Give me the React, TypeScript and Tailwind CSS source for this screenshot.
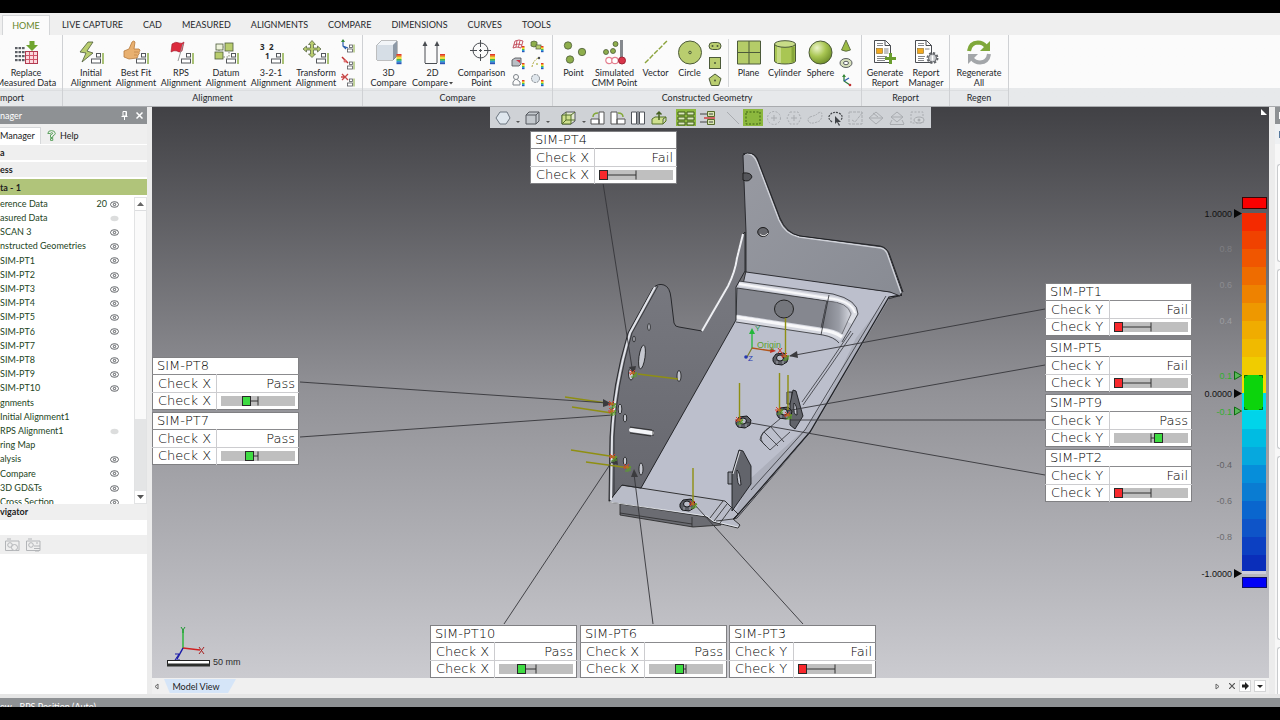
import React, { ReactNode } from "react";

const GREEN = "#b9cd6f";
const EDGE = "#4c5a3a";
const INK = "#4a4d52";

/* ---------- shared drawing pieces ---------- */

function Big({ children, w = 30 }: { children: ReactNode; w?: number }) {
  return (
    <svg width={w} height="26" viewBox={`0 0 ${w} 26`} fill="none" aria-hidden="true" className="shrink-0">
      {children}
    </svg>
  );
}

function Small({ children }: { children: ReactNode }) {
  return (
    <svg width="14" height="14" viewBox="0 0 14 14" fill="none" aria-hidden="true" className="shrink-0">
      {children}
    </svg>
  );
}

function Badge() {
  return (
    <g>
      <g stroke="#55585c" fill="#fff">
        <rect x="20.5" y="14.5" width="4" height="3.5" />
        <rect x="15.5" y="20" width="9" height="4" />
      </g>
      <path d="M27 14v11" stroke="#86a93c" strokeWidth="1.4" />
    </g>
  );
}

function SmallBadge() {
  return (
    <g>
      <rect x="8.5" y="6" width="3" height="2.5" stroke="#55585c" fill="#fff" strokeWidth=".8" />
      <rect x="6.5" y="10" width="5" height="3" stroke="#55585c" fill="#fff" strokeWidth=".8" />
      <path d="M13 5.5v8" stroke="#86a93c" />
    </g>
  );
}

function Spectrum({ x, y, w = 5, h = 10 }: { x: number; y: number; w?: number; h?: number }) {
  const colors = ["#e03a2c", "#f0a020", "#e9e23a", "#4cb848", "#2a9fd8", "#2b55b8"];
  return (
    <g>
      {colors.map((c, i) => (
        <rect key={c} x={x} y={y + (i * h) / 6} width={w} height={h / 6 + 0.2} fill={c} />
      ))}
    </g>
  );
}

/* ---------- ribbon icons ---------- */

const icons = {
  replace: (
    <Big>
      <g fill="#5c6066">
        {[8, 12, 16, 20].map((y) => [4, 7.5, 11].map((x) => <rect key={`${x}-${y}`} x={x} y={y} width="2.6" height="2.2" />))}
      </g>
      <rect x="14.5" y="12.5" width="12" height="12" fill="#fbd9de" stroke="#b23a50" />
      <path d="M15 16.500h11M15 20.500h11M18.500 13v11M22.500 13v11" stroke="#d0566a" />
      <path d="M18.500 2h5v4h3.500l-6 6-6-6h3.500z" fill="#6fa52f" />
    </Big>
  ),
  initial: (
    <Big>
      <path d="M12 3 4 13l6 1-4 9 11-9-6-2 6-9z" fill={GREEN} stroke={EDGE} strokeWidth=".8" />
      <Badge />
    </Big>
  ),
  bestFit: (
    <Big>
      <path d="M3 12 8 10 11 3q2-2 3 0l-1 7h5q2 1 0 3 1 2-1 3 0 2-1 3l-8 1-5-2z" fill="#e8b070" stroke="#b67a3c" strokeWidth=".8" />
      <path d="M13 13h4M13 16h3" stroke="#b67a3c" strokeWidth=".6" />
      <Badge />
    </Big>
  ),
  rps: (
    <Big>
      <path d="M6 5q4-3 7-1 3 1 5-1l-2 9q-3 2-5 0-3-1-6 1z" fill="#dc2a3c" stroke="#a01828" strokeWidth=".6" />
      <path d="M17 5l-5 17" stroke="#999" />
      <Badge />
    </Big>
  ),
  datum: (
    <Big>
      <path d="M8 8h10v10H8z" stroke={EDGE} strokeDasharray="1.500 1.500" strokeWidth=".7" />
      <g stroke={EDGE} strokeWidth=".8">
        <rect x="5" y="5" width="7" height="6" fill="#eef3dc" />
        <rect x="14" y="4" width="8" height="8" fill={GREEN} />
        <rect x="4" y="13" width="8" height="7" fill={GREEN} />
      </g>
      <Badge />
    </Big>
  ),
  threeTwoOne: (
    <Big>
      <g fill="#26282b" fontSize="8" fontWeight="700" fontFamily="Noto Sans, sans-serif">
        <text x="4" y="11">3</text>
        <text x="13" y="11">2</text>
        <text x="9" y="20">1</text>
      </g>
      <Badge />
    </Big>
  ),
  transform: (
    <Big>
      <path d="M11 1.500l3.500 4h-2V9h4V7l3.500 3-3.500 3v-2h-4v4h2L11 18.500 7.500 15h2v-4h-4v2L2 10l3.500-3v2h4V5.500h-2z" fill={GREEN} stroke={EDGE} strokeWidth=".7" />
      <Badge />
    </Big>
  ),
  compare3d: (
    <Big>
      <path d="M3 6l4-4h16v15l-4 4H3z" fill="#c3ccd6" stroke={INK} strokeWidth=".7" />
      <path d="M3 6h16v15H3z" fill="#d6dee6" />
      <path d="M3 6l4-4h16l-4 4z" fill="#f2f5f8" />
      <path d="M19 6l4-4v15l-4 4z" fill="#8d99a6" />
      <Spectrum x={22.5} y={15} />
    </Big>
  ),
  compare2d: (
    <Big>
      <path d="M7 24V4M19 24V4M7 24.500h12" stroke={INK} />
      <path d="M4.500 7 7 2l2.500 5zM16.500 7 19 2l2.500 5z" fill={INK} />
      <Spectrum x={22} y={15} />
    </Big>
  ),
  comparePoint: (
    <Big>
      <circle cx="13.500" cy="11.500" r="7.500" stroke={INK} />
      <path d="M13.500 1v7M13.500 15v7M3 11.500h7M17 11.500h7M12 11.500h3M13.500 10v3" stroke={INK} />
      <Spectrum x={23} y={15} />
    </Big>
  ),
  point: (
    <Big>
      <g fill="#8eae4c" stroke={EDGE} strokeWidth=".8">
        <circle cx="9" cy="6.500" r="3.700" />
        <circle cx="23" cy="13" r="3.700" />
        <circle cx="11" cy="20.500" r="3.700" />
      </g>
    </Big>
  ),
  cmm: (
    <Big>
      <rect x="20" y="1" width="3" height="17" fill="#85898e" />
      <g fill="#8eae4c" stroke={EDGE} strokeWidth=".8">
        <circle cx="15.500" cy="5" r="2.500" />
        <circle cx="6" cy="13" r="2.500" />
        <circle cx="13" cy="12" r="2.500" />
      </g>
      <g stroke="#e48090" strokeWidth="1.2" fill="#fff">
        <circle cx="9" cy="21.500" r="3.200" />
        <circle cx="15" cy="21.500" r="3.200" />
      </g>
      <circle cx="22" cy="21.500" r="3.500" fill="#d8354a" stroke="#a02234" />
    </Big>
  ),
  vector: (
    <Big>
      <path d="M4 24 26 2" stroke="#8ba33c" strokeWidth="1.4" strokeDasharray="5 1.500" />
    </Big>
  ),
  circle: (
    <Big>
      <circle cx="15" cy="13.500" r="11.500" fill={GREEN} stroke={EDGE} />
      <circle cx="15" cy="13.500" r="1.300" stroke={EDGE} />
    </Big>
  ),
  plane: (
    <Big>
      <path d="M3.500 2h23v23h-23zM15 2v23M3.500 13.500h23" fill="#b4cc68" stroke={EDGE} />
    </Big>
  ),
  cylinder: (
    <Big>
      <path d="M4.500 5v17c0 4 21 4 21 0V5" fill="#a9c653" stroke={EDGE} />
      <path d="M9 8v16" stroke="#c6da84" strokeWidth="4" />
      <path d="M23 8v15" stroke="#86a63a" strokeWidth="3" />
      <ellipse cx="15" cy="5" rx="10.500" ry="3.300" fill="#c8dc88" stroke={EDGE} />
    </Big>
  ),
  sphere: (
    <Big>
      <defs>
        <radialGradient id="ball" cx=".35" cy=".3" r=".75">
          <stop offset="0" stopColor="#edf5cc" />
          <stop offset=".5" stopColor="#a9c653" />
          <stop offset="1" stopColor="#6d8c28" />
        </radialGradient>
      </defs>
      <circle cx="14.500" cy="13.500" r="11.500" fill="url(#ball)" stroke={EDGE} />
    </Big>
  ),
  report: (
    <Big>
      <path d="M4.500 1.500h11l5 5v17h-16z" fill="#fff" stroke={INK} />
      <path d="M15 1.500v5h5.500" stroke={INK} />
      <rect x="6.500" y="9.500" width="6" height="5" fill="#f2a81d" stroke="#8b6a20" strokeWidth=".6" />
      <path d="M7 4.500h6M7 6.500h6M14 10h4.500M14 12h4.500M14 14h4.500M7 17.500h10M7 19.500h8M7 21.500h8" stroke="#77797d" strokeWidth=".9" />
      <path d="M15 19.500h11M20.500 14v11" stroke="#6a9d2e" strokeWidth="3" />
    </Big>
  ),
  manager: (
    <Big>
      <path d="M4.500 1.500h11l5 5v17h-16z" fill="#fff" stroke={INK} />
      <path d="M15 1.500v5h5.500" stroke={INK} />
      <rect x="6.500" y="9.500" width="6" height="5" fill="#f2a81d" stroke="#8b6a20" strokeWidth=".6" />
      <path d="M7 4.500h6M7 6.500h6M14 10h4.500M7 17.500h7M7 19.500h6M7 21.500h6" stroke="#77797d" strokeWidth=".9" />
      <circle cx="21.500" cy="19" r="5" stroke="#63666a" strokeWidth="2" strokeDasharray="2.200 1.700" />
      <circle cx="21.500" cy="19" r="4" fill="#c9cbce" stroke="#63666a" />
      <path d="M21.500 16.500v5" stroke="#fff" strokeWidth="1.500" />
    </Big>
  ),
  regen: (
    <Big>
      <path d="M5 12q1-8 9-8.500 5 0 8 4" stroke="#7fa83a" strokeWidth="4" />
      <path d="M26 2v10H16z" fill="#7fa83a" />
      <path d="M25 15q-1 8-9 8.500-5 0-8-4" stroke="#a3a6a9" strokeWidth="4" />
      <path d="M4 25V15h10z" fill="#a3a6a9" />
    </Big>
  ),
};

const alignSmall = [
  <Small key="a"><path d="M2 1v6l5 2M2 7l3 3" stroke="#2c5fb0" strokeWidth="1.200" /><path d="M0 3 2 0l2 3z" fill="#3a8a3a" /><SmallBadge /></Small>,
  <Small key="b"><path d="M1 1l6 6" stroke="#c03030" strokeWidth="1.500" /><circle cx="4" cy="5" r="1.500" fill="#e07070" /><SmallBadge /></Small>,
  <Small key="c"><path d="M1 1l6 6M7 1 1 7M0 4h4" stroke="#c84848" strokeWidth="1.300" /><SmallBadge /></Small>,
];

const compareSmall = [
  <Small key="1"><path d="M2 9 4 2q4-2 8 0l-2 7q-4-2-8 0zM3 6q4-2 8 0M6 1.500 5 8M9 1.500 7.500 8" stroke="#c04454" strokeWidth=".9" /><Spectrum x={11} y={7} w={2.500} h={6} /></Small>,
  <Small key="2"><path d="M1 3v4q3 2 6 0V3q-3-2-6 0z" fill="#8eae4c" stroke={EDGE} strokeWidth=".7" /><rect x="6" y="6" width="5" height="4" fill={GREEN} stroke={EDGE} strokeWidth=".7" /><Spectrum x={11} y={7} w={2.500} h={6} /></Small>,
  <Small key="3"><path d="M1 4l3-2h6v6L8 10H1z" fill="#b9bec4" stroke={INK} strokeWidth=".8" /><path d="M5 4h4v3z" fill="#d03040" /><Spectrum x={11} y={7} w={2.500} h={6} /></Small>,
  <Small key="4"><path d="M2 11q1-6 6-9" stroke="#b0a840" strokeDasharray="2 1" /><circle cx="9" cy="2" r="1.200" fill={INK} /><circle cx="7" cy="8" r="1" fill="#b8c060" /><Spectrum x={11} y={7} w={2.500} h={6} /></Small>,
  <Small key="5"><circle cx="5" cy="4" r="2.500" stroke="#7c8288" /><path d="M4 6.500 2 9v3h7V9L6 6.500" stroke="#7c8288" /><Spectrum x={11} y={7} w={2.500} h={6} /></Small>,
  <Small key="6"><circle cx="5.500" cy="5.500" r="4" fill="#dfe6ec" stroke="#7c8288" strokeDasharray="2 .8" /><Spectrum x={11} y={7} w={2.500} h={6} /></Small>,
];

const shapeSmall = [
  <Small key="s"><rect x="1" y="3.500" width="12" height="7" rx="3.500" fill={GREEN} stroke={EDGE} /><circle cx="4.500" cy="7" r="1" fill={EDGE} /><circle cx="9.500" cy="7" r="1" fill={EDGE} /></Small>,
  <Small key="r"><rect x="1.500" y="1.500" width="11" height="11" fill={GREEN} stroke={EDGE} /><circle cx="7" cy="7" r="1" fill={EDGE} /></Small>,
  <Small key="p"><path d="M7 1l6 4.500-2.300 7H3.300L1 5.500z" fill={GREEN} stroke={EDGE} /><circle cx="7" cy="7.500" r="1" fill={EDGE} /></Small>,
];

const solidSmall = [
  <Small key="c"><path d="M7 1l4.500 10q-4.500 2.500-9 0z" fill="#9cbc45" stroke={EDGE} strokeWidth=".8" /></Small>,
  <Small key="t"><ellipse cx="7" cy="7" rx="6" ry="4.500" fill="#d6dfbb" stroke={INK} strokeWidth=".9" /><ellipse cx="7" cy="7" rx="2.500" ry="1.700" fill="#fff" stroke={INK} strokeWidth=".9" /></Small>,
  <Small key="x"><path d="M5 2v6l6 4" stroke="#2f7a3a" strokeWidth="1.300" /><path d="M5 8l5-3" stroke="#2c5fb0" strokeWidth="1.300" /><circle cx="11" cy="12" r="1.300" fill="#c03030" /><path d="M3 4 5 1l2 3z" fill="#3a8a3a" /></Small>,
];

/* ---------- ribbon ---------- */

function Tool({ icon, top, bottom, w, menu }: { icon: ReactNode; top: string; bottom?: string; w: string; menu?: boolean }) {
  return (
    <button type="button" className={`flex shrink-0 flex-col items-center gap-[3px] pt-1 text-[9px] leading-[10px] whitespace-nowrap ${w}`}>
      {icon}
      <span className="flex flex-col items-center">
        <span>{top}</span>
        {bottom && (
          <span className="flex items-center gap-px">
            {bottom}
            {menu && (
              <svg width="4" height="3" viewBox="0 0 4 3" aria-hidden="true"><path d="M0 0h4L2 2.500z" fill="#444" /></svg>
            )}
          </span>
        )}
      </span>
    </button>
  );
}

function SmallColumn({ items, names, wide }: { items: ReactNode[]; names: string[]; wide?: boolean }) {
  return (
    <div className={`flex shrink-0 flex-col gap-[3px] pt-1 ${wide ? "px-[3px]" : "px-[2px]"}`}>
      {items.map((item, i) => (
        <button type="button" key={names[i]} aria-label={names[i]} className="block">{item}</button>
      ))}
    </div>
  );
}

function Group({ label, w, pad = "", children }: { label: string; w: string; pad?: string; children: ReactNode }) {
  return (
    <section className={`flex shrink-0 flex-col overflow-hidden border-r border-[#cfd1d4] ${w}`}>
      <div className={`flex h-[55px] justify-center ${pad}`}>{children}</div>
      <h2 className="h-[16px] border-t border-[#dcdee0] bg-[#e7e9eb] text-center text-[9px] leading-[14px]">{label}</h2>
    </section>
  );
}

const tabs = ["HOME", "LIVE CAPTURE", "CAD", "MEASURED", "ALIGNMENTS", "COMPARE", "DIMENSIONS", "CURVES", "TOOLS"];

function Ribbon() {
  return (
    <header className="shrink-0 bg-[#e7e9eb] text-[#26282c]">
      <nav className="flex h-[22px] items-end bg-[#efefef] pl-[2px]">
        {tabs.map((t, i) => (
          <button
            key={t}
            type="button"
            className={
              i === 0
                ? "mr-[2px] h-[20px] w-[48px] border border-b-0 border-[#d4d6d8] bg-[#fbfbfb] text-[9px] leading-[16px] text-[#67862a]"
                : "h-[20px] px-[10px] text-[9px] leading-[18px] whitespace-nowrap"
            }
          >
            {t}
          </button>
        ))}
      </nav>
      <div className="flex h-[72px] border-b border-[#a9abae] bg-linear-to-b from-[#fbfbfb] from-75% to-[#e7e9eb] to-75%">
        <section className="flex w-[63px] shrink-0 flex-col overflow-hidden border-r border-[#cfd1d4]">
          <div className="flex h-[55px] justify-end pr-[6px]">
            <Tool icon={icons.replace} top="Replace" bottom="Measured Data" w="w-[60px]" />
          </div>
          <h2 className="h-[16px] border-t border-[#dcdee0] bg-[#e7e9eb] text-[9px] leading-[14px]">mport</h2>
        </section>
        <Group label="Alignment" w="w-[300px]">
          <Tool icon={icons.initial} top="Initial" bottom="Alignment" w="w-[45px]" />
          <Tool icon={icons.bestFit} top="Best Fit" bottom="Alignment" w="w-[45px]" />
          <Tool icon={icons.rps} top="RPS" bottom="Alignment" w="w-[45px]" />
          <Tool icon={icons.datum} top="Datum" bottom="Alignment" w="w-[45px]" />
          <Tool icon={icons.threeTwoOne} top="3-2-1" bottom="Alignment" w="w-[45px]" />
          <Tool icon={icons.transform} top="Transform" bottom="Alignment" w="w-[45px]" />
          <SmallColumn items={alignSmall} names={["Align to axes", "Align by point", "Clear alignment"]} />
        </Group>
        <Group label="Compare" w="w-[190px]" pad="pr-[2px]">
          <Tool icon={icons.compare3d} top="3D" bottom="Compare" w="w-[44px]" />
          <Tool icon={icons.compare2d} top="2D" bottom="Compare" w="w-[44px]" menu />
          <Tool icon={icons.comparePoint} top="Comparison" bottom="Point" w="w-[54px]" />
          <SmallColumn items={[compareSmall[0], compareSmall[2], compareSmall[4]]} names={["Surface", "Solid", "Silhouette"]} />
          <SmallColumn wide items={[compareSmall[1], compareSmall[3], compareSmall[5]]} names={["Geometry", "Curve", "Boundary"]} />
        </Group>
        <Group label="Constructed Geometry" w="w-[309px]" pad="pr-[4px]">
          <Tool icon={icons.point} top="Point" w="w-[36px]" />
          <Tool icon={icons.cmm} top="Simulated" bottom="CMM Point" w="w-[46px]" />
          <Tool icon={icons.vector} top="Vector" w="w-[36px]" />
          <Tool icon={icons.circle} top="Circle" w="w-[32px]" />
          <SmallColumn items={shapeSmall} names={["Slot", "Rectangle", "Polygon"]} />
          <span className="mx-[4px] mt-1 h-[48px] w-px shrink-0 bg-[#d5d7d9]" />
          <Tool icon={icons.plane} top="Plane" w="w-[32px]" />
          <Tool icon={icons.cylinder} top="Cylinder" w="w-[40px]" />
          <Tool icon={icons.sphere} top="Sphere" w="w-[32px]" />
          <SmallColumn items={solidSmall} names={["Cone", "Torus", "Coordinate system"]} />
        </Group>
        <Group label="Report" w="w-[88px]">
          <Tool icon={icons.report} top="Generate" bottom="Report" w="w-[41px]" />
          <Tool icon={icons.manager} top="Report" bottom="Manager" w="w-[41px]" />
        </Group>
        <Group label="Regen" w="w-[59px]">
          <Tool icon={icons.regen} top="Regenerate" bottom="All" w="w-[50px]" />
        </Group>
      </div>
    </header>
  );
}

/* ---------- left panel ---------- */

type Row = { label: string; eye?: "on" | "off"; count?: number };

const rows: Row[] = [
  { label: "erence Data", eye: "on", count: 20 },
  { label: "asured Data", eye: "off" },
  { label: "SCAN 3", eye: "on" },
  { label: "nstructed Geometries", eye: "on" },
  ...[1, 2, 3, 4, 5, 6, 7, 8, 9, 10].map((n): Row => ({ label: `SIM-PT${n}`, eye: "on" })),
  { label: "gnments" },
  { label: "Initial Alignment1" },
  { label: "RPS Alignment1", eye: "off" },
  { label: "ring Map" },
  { label: "alysis", eye: "on" },
  { label: "Compare", eye: "on" },
  { label: "3D GD&Ts", eye: "on" },
  { label: "Cross Section", eye: "on" },
];

function Eye({ on }: { on: boolean }) {
  return (
    <svg width="9" height="7" viewBox="0 0 9 7" fill="none" aria-hidden="true">
      {on ? (
        <g stroke="#55585c">
          <ellipse cx="4.500" cy="3.500" rx="4" ry="2.800" strokeWidth=".9" />
          <circle cx="4.500" cy="3.500" r="1.200" />
        </g>
      ) : (
        <ellipse cx="4.500" cy="3.500" rx="4" ry="2.800" fill="#dcdddd" />
      )}
    </svg>
  );
}

function LeftPanel() {
  return (
    <aside className="flex w-[147px] shrink-0 flex-col bg-white text-[9px] text-[#222]">
      <div className="flex h-[17px] items-center justify-between bg-[#8e9194] pr-1 text-white">
        <span>nager</span>
        <span className="flex gap-[8px]">
          <button type="button" aria-label="Pin">
            <svg width="7" height="9" viewBox="0 0 7 9" fill="none" stroke="#fff" aria-hidden="true"><path d="M2 .5h3.500V5H2zM.5 5.500h6M3.500 5.500V9M5 .5V5" /></svg>
          </button>
          <button type="button" aria-label="Close">
            <svg width="7" height="7" viewBox="0 0 7 7" stroke="#fff" strokeWidth="1.500" aria-hidden="true"><path d="M.5.5l6 6M6.500.5l-6 6" /></svg>
          </button>
        </span>
      </div>
      <div className="flex h-[20px] items-end bg-[#efefef]">
        <button type="button" className="h-[17px] w-[41px] border-t border-r border-[#d6d8da] bg-white text-left leading-[16px]">Manager</button>
        <button type="button" className="flex h-[17px] items-center gap-[4px] px-[6px]">
          <svg width="9" height="11" viewBox="0 0 9 11" fill="none" stroke="#4e9a50" strokeWidth=".9" aria-hidden="true"><path d="M.8 3.500Q1 .6 4.500.6T8.300 3.500Q8 5 5.800 6v1.500H3.500V4.800Q6 4 5.800 3.200 4.500 2 3.200 3.500zM3.500 8.500h2.300v1.900H3.500z" /></svg>
          Help
        </button>
      </div>
      <div className="flex flex-col gap-[2px] pt-px pb-[2px] font-bold">
        <h3 className="h-[15px] bg-[#efefef] leading-[15px]">a</h3>
        <h3 className="h-[15px] bg-[#efefef] leading-[16px]">ess</h3>
        <h3 className="h-[16px] bg-[#b0c47a] leading-[17px]">ta - 1</h3>
      </div>
      <div className="flex h-[307px] shrink-0">
        <ul className="flex min-w-0 flex-1 flex-col overflow-hidden text-[#1d451d]">
          {rows.map((r, i) => (
            <li key={i} className={`flex shrink-0 items-center justify-between pr-[15px] ${i % 5 === 4 ? "h-[15px]" : "h-[14px]"}`}>
              <span className="whitespace-nowrap">{r.label}</span>
              <span className="flex items-center gap-[3px]">
                {r.count}
                {r.eye && <Eye on={r.eye === "on"} />}
              </span>
            </li>
          ))}
        </ul>
        <div className="flex w-[13px] flex-col border border-[#e2e3e4] bg-[#e4e5e6]">
          <button type="button" aria-label="Scroll up" className="flex h-[13px] items-center justify-center border-b border-[#dcdddf] bg-white">
            <svg width="7" height="4" viewBox="0 0 7 4" aria-hidden="true"><path d="M0 4h7L3.500 0z" fill="#666" /></svg>
          </button>
          <span className="h-[208px] bg-[#fafafa]" />
          <span className="flex-1" />
          <button type="button" aria-label="Scroll down" className="flex h-[12px] items-center justify-center bg-white">
            <svg width="7" height="4" viewBox="0 0 7 4" aria-hidden="true"><path d="M0 0h7L3.500 4z" fill="#555" /></svg>
          </button>
        </div>
      </div>
      <h3 className="h-[16px] shrink-0 bg-[#efefef] font-bold leading-[16px]">vigator</h3>
      <div className="mt-[15px] flex h-[19px] shrink-0 items-center gap-[6px] bg-[#efefef] pl-[5px]">
        {["Capture view", "Edit view"].map((n, i) => (
          <button type="button" key={n} aria-label={n}>
            <svg width="15" height="14" viewBox="0 0 15 14" fill="none" stroke="#b3b5b8" aria-hidden="true">
              <path d="M.5 3h13.500v9.500H.5zM2 1h4" />
              <circle cx="5" cy="7" r="2.300" />
              {i === 0 ? <circle cx="9.500" cy="9.500" r="3" fill="#efefef" /> : <path d="M8 8h6M8 10.500h6M9 13h4M10 5h2" />}
            </svg>
          </button>
        ))}
      </div>
    </aside>
  );
}

/* ---------- 3D view ---------- */

type Check = { name: string; axis: "X" | "Y"; pass: boolean; at: number; place: string };

const checks: Check[] = [
  { name: "SIM-PT4", axis: "X", pass: false, at: 0, place: "left-[378px] top-[24px]" },
  { name: "SIM-PT8", axis: "X", pass: true, at: 21, place: "left-0 top-[250px]" },
  { name: "SIM-PT7", axis: "X", pass: true, at: 24, place: "left-0 top-[305px]" },
  { name: "SIM-PT1", axis: "Y", pass: false, at: 0, place: "left-[893px] top-[176px]" },
  { name: "SIM-PT5", axis: "Y", pass: false, at: 0, place: "left-[893px] top-[232px]" },
  { name: "SIM-PT9", axis: "Y", pass: true, at: 40, place: "left-[893px] top-[287px]" },
  { name: "SIM-PT2", axis: "Y", pass: false, at: 0, place: "left-[893px] top-[342px]" },
  { name: "SIM-PT10", axis: "X", pass: true, at: 18, place: "left-[278px] top-[518px]" },
  { name: "SIM-PT6", axis: "X", pass: true, at: 26, place: "left-[428px] top-[518px]" },
  { name: "SIM-PT3", axis: "Y", pass: false, at: 0, place: "left-[577px] top-[518px]" },
];

function Callout({ c }: { c: Check }) {
  return (
    <table className={`absolute w-[147px] table-fixed border-collapse border border-[#808083] bg-white font-['DejaVu_Sans',Verdana,sans-serif] text-[13px] font-extralight text-black ${c.place}`}>
      <colgroup>
        <col className="w-[64px]" />
        <col />
      </colgroup>
      <tbody>
        <tr className="h-[17px] border-b border-[#8b8b8e]">
          <th colSpan={2} scope="colgroup" className="p-0 pl-[4px] text-left font-extralight leading-[16px]">{c.name}</th>
        </tr>
        <tr className="h-[18px] border-b border-[#cccccf]">
          <th scope="row" className="border-r border-[#cccccf] p-0 pl-[5px] text-left font-extralight leading-[16px] whitespace-nowrap">Check {c.axis}</th>
          <td className="p-0 pr-[3px] text-right leading-[16px]">{c.pass ? "Pass" : "Fail"}</td>
        </tr>
        <tr className="h-[17px]">
          <th scope="row" className="border-r border-[#cccccf] p-0 pl-[5px] text-left font-extralight leading-[16px] whitespace-nowrap">Check {c.axis}</th>
          <td className="p-0 pl-[4px]">
            <svg width="74" height="10" viewBox="0 0 74 10" className="block" aria-hidden="true">
              <rect width="74" height="10" fill="#bfbfbf" />
              <path d={`M${c.at + 4} 5H37M37 .5v9`} stroke="#333" />
              <rect x={c.at + 0.5} y=".5" width="8" height="9" fill={c.pass ? "#3edb42" : "#f8282c"} stroke="#2a2a2a" />
            </svg>
          </td>
        </tr>
      </tbody>
    </table>
  );
}

function Hex({ x, y }: { x: number; y: number }) {
  return (
    <g transform={`translate(${x} ${y})`}>
      <path d="M-8-1-5-5 3-6 7-2 6 3 1 6-6 5-8 2z" fill="#5b5d64" stroke="#17181a" />
      <ellipse cx="-1" cy="-1" rx="3.500" ry="3" fill="#b9bcc8" stroke="#17181a" />
      <path d="M-4 2v3M2 2v3" stroke="#c9ccd4" strokeWidth=".7" />
    </g>
  );
}

function Marker({ x, y }: { x: number; y: number }) {
  return (
    <g transform={`translate(${x} ${y})`}>
      <path d="M-3-3l5 5M2-3l-5 5M-4 0h7" stroke="#dd3c2c" />
      <path d="M0 3l4-3M3-1v5M-2 4h4" stroke="#5da02a" strokeWidth="1.200" />
      <circle r="1.500" fill="#b07420" />
    </g>
  );
}

function Bracket() {
  return (
    <svg viewBox="152 107 1117 571" width="1117" height="571" className="block" fill="none" role="img" aria-label="Bracket model">
      <defs>
        <linearGradient id="back" x1="0" y1="0" x2="1" y2="1">
          <stop offset="0" stopColor="#989aa2" />
          <stop offset="1" stopColor="#888b93" />
        </linearGradient>
        <linearGradient id="side" x1="0" y1="0" x2="0" y2="1">
          <stop offset="0" stopColor="#7b7c83" />
          <stop offset="1" stopColor="#66676e" />
        </linearGradient>
        <linearGradient id="corner" x1="0" y1="0" x2="1" y2="0">
          <stop offset="0" stopColor="#777981" />
          <stop offset=".6" stopColor="#9a9da6" />
          <stop offset="1" stopColor="#d8dae2" />
        </linearGradient>
      </defs>

      {/* floor and right flange */}
      <path d="M746 271 891 292 902 295 888 299 809 434 737 518 723 523 640 489 735 320z" fill="#bcbfcc" stroke="#26272a" strokeWidth=".9" />
      <path d="M888 297 856 338 829 394 806 428 751 478 736 511 724 522 734 520 810 434 889 299z" fill="#adb0bc" />
      <path d="M902 295 889 297 810 432 734 519" stroke="#202124" strokeWidth="1.300" />
      <path d="M886 296 805 430 751 490M853 333 829 368 803 405M851 331 826 368 802 402" stroke="#34353a" strokeWidth=".8" />

      {/* back pocket */}
      <path d="M739 281 834 295q23 5 23 19l-13 25-21-4-87-13V288z" fill="#c6c8d2" />
      <path d="M737 288 827 301 821 329 736 315z" fill="#85878f" stroke="#26272a" strokeWidth=".8" />
      <path d="M827 301q21 1 24 13l-9 20q-10-3-21-5z" fill="url(#corner)" stroke="#3c3d42" strokeWidth=".6" />
      <path d="M739 284 827 298q24 2 28 15l-5 10" stroke="#dcdee5" strokeWidth="4.500" />
      <path d="M739 284 827 298q24 2 28 15" stroke="#f8f8fa" strokeWidth="2" />
      <path d="M736 318 820 331q14 1 22 7" stroke="#d6d8e0" strokeWidth="7" />
      <path d="M736 317 820 330q14 1 22 7" stroke="#f8f8fa" strokeWidth="3" />
      <path d="M739 281 833 294q25 6 25 20l-16 28M736 322 823 335q11 2 16 8M829 295 821 335" stroke="#2c2d31" strokeWidth=".8" />
      <ellipse cx="784" cy="309" rx="9.500" ry="9" fill="#74767c" stroke="#222" />

      {/* back plate */}
      <path d="M743 155q8-4 13 4l23 59q5 15 20 18l81 11q5 0 8 6l14 39-2 4-10-4-144-20V232z" fill="url(#back)" stroke="#222327" strokeWidth=".9" />
      <path d="M745 154q8-2 12 8l22 58q6 14 20 17l82 11q4 1 6 5l14 40" stroke="#cfd1d8" strokeWidth="1.500" />
      <path d="M743 154q10-3 14 4l23 60q6 15 20 18l80 10q6 1 9 7l14 39" stroke="#1c1d20" strokeWidth=".9" />
      <path d="M743 173q8-1 9 4-3 6-9 3z" fill="#55565b" stroke="#111" strokeWidth=".8" />
      <ellipse cx="763" cy="232" rx="5.300" ry="4.500" fill="#66676c" stroke="#111" strokeWidth=".9" />
      <path d="M760 234q4 4 8-1" stroke="#ddd" />

      {/* front flange */}
      <path d="M620 504v11l73 12 28-2v-8z" fill="#6b6c72" stroke="#222" strokeWidth=".8" />
      <path d="M692 517v10M620 513l72 11" stroke="#222" strokeWidth=".7" />
      <path d="M621 485 725 501 738 514 733 519 740 525 738 528 713 522 707 517 609 502z" fill="#b9bcc8" stroke="#222" strokeWidth=".9" />
      <path d="M609 502 707 516 713 521 738 527" stroke="#eef0f4" strokeWidth=".8" />
      <path d="M723 501 710 518M727 504 714 521M731 508 720 523M716 521l17-2" stroke="#222" strokeWidth=".8" />

      {/* left plate */}
      <path d="M609 501 610 437Q612 385 628 333L653 288q5-5 11-3 6 2 7 13l3 25q1 4 5 4l23 4 25-44q7-13 10-31l6-22 2-2v39l-9 16v33L641 488l-19-3z" fill="url(#side)" stroke="#1e1f22" strokeWidth=".9" />
      <path d="M611 500 612 437Q614 387 630 333L655 287" stroke="#e2e4ea" strokeWidth="2" />
      <path d="M702 331 728 286Q735 272 737 258L743 234" stroke="#eeeff3" strokeWidth="2" />
      <path d="M614 495 614 437Q616 387 632 333L658 286" stroke="#1e1f22" strokeWidth=".7" />
      <g fill="#c6c8d0" stroke="#151618" strokeWidth=".8">
        <ellipse cx="642" cy="357" rx="3" ry="12" transform="rotate(8 642 357)" />
        <ellipse cx="649" cy="327" rx="1.300" ry="3.500" />
        <ellipse cx="634" cy="339" rx="1.200" ry="3" />
        <ellipse cx="679" cy="376" rx="2" ry="5.500" />
        <ellipse cx="631" cy="374" rx="2.500" ry="6" />
        <ellipse cx="620" cy="409" rx="1.800" ry="5" />
        <ellipse cx="625" cy="418" rx="1.700" ry="4" />
        <ellipse cx="625" cy="461" rx="1.700" ry="4" />
        <ellipse cx="641" cy="469" rx="2" ry="6" />
      </g>
      <path d="M631 430 652 433" stroke="#f4f5f8" strokeWidth="4" strokeLinecap="round" />
      <path d="M630 427 652 430M630 433 651 436M653 430v6" stroke="#222" strokeWidth=".8" />

      {/* standing tabs */}
      <g stroke="#1a1b1e" fill="#62646b" strokeWidth=".9">
        <path d="M728 472h5v12h-5z" fill="#8d9099" />
        <path d="M732 474 739 450 743 451 751 466 751 484 732 511z" />
        <path d="M787 392h5v12h-5z" fill="#8d9099" />
        <path d="M790 404 793 390 796 391 803 416 795 429 790 425z" />
        <path d="M737 470q3 2 4 15-4 3-4-15z" fill="#c7cad4" />
        <path d="M794 403q3 2 3 12-4 1-3-12z" fill="#c7cad4" />
      </g>
      <path d="M733 474 740 451" stroke="#dfe1e6" />
      <path d="M760 440q1-8 10-13M766 446q-8-6-3-13l18-15M770 426l14 16M764 432l14 14M760 440l10 10 20-18" stroke="#2c2d31" strokeWidth=".8" />

      {/* fasteners */}
      <Hex x={781} y={359} />
      <Hex x={744} y={422} />
      <Hex x={785} y={413} />
      <Hex x={688} y={505} />

      {/* probe directions */}
      <path d="M785.500 318v36M739.500 383v37M779.500 373v38M788 375v35M693 468v36M638 374l40 5M565 397l48 7M572 407l40 6M571 450l45 7M586 462l44 6" stroke="#8f8f12" strokeWidth="1.400" />

      {/* leader lines */}
      <g stroke="#36363a" strokeWidth=".9">
        <path d="M603 183 633 374M300 382l308 21M300 437l313-22M1045 309 790 356M1045 365 786 411M1045 420H790M1045 475 745 422" />
        <path d="M504 624 613 460M653 624 634 474M803 624 695 505" />
      </g>
      <g fill="#3b3b3e">
        <path d="M603 399l9 5-9 3zM789 356l8-5 1 7zM629 367l5 8 2-9zM631 477l3-8 4 8zM611 463l6-6 1 8z" />
      </g>
      {[[785, 356], [739, 420], [779, 410], [788, 415], [693, 504], [633, 373], [612, 404], [612, 411], [613, 457], [627, 467]].map(([x, y]) => (
        <Marker key={`${x}-${y}`} x={x} y={y} />
      ))}

      {/* origin triad */}
      <path d="M752 348v-16" stroke="#22b83a" strokeWidth="1.300" />
      <path d="M749 334l3-6 3 6z" fill="#22b83a" />
      <path d="M752 348l20 3" stroke="#b0561c" strokeWidth="1.300" />
      <path d="M771 348l5 3-6 2z" fill="#c03020" />
      <path d="M752 348l-5 9" stroke="#7a7c28" strokeWidth="1.200" />
      <circle cx="746" cy="357" r="1.800" fill="#2638b0" />
      <path d="M778 348l4 5M782 348l-4 5" stroke="#d03428" />
      <g fontFamily="Liberation Sans, sans-serif" fontSize="8">
        <text x="757" y="348" fontSize="9" fill="#5ba02c">Origin</text>
        <text x="755" y="331" fill="#1a9c50">Y</text>
        <text x="748" y="361" fill="#2638b0">Z</text>
      </g>

      {/* view triad and scale bar */}
      <path d="M183 648v-18" stroke="#18b428" strokeWidth="1.300" />
      <path d="M183 648l17 2" stroke="#d02020" strokeWidth="1.300" />
      <path d="M183 648l-6 11" stroke="#1818a8" strokeWidth="1.500" />
      <path d="M181 627l2 3 2-3M183 630v3" stroke="#18982c" />
      <path d="M199 647l5 7M204 647l-5 7" stroke="#a82020" />
      <path d="M175 654h4l-4 6h5" stroke="#1818a8" />
      <rect x="167.500" y="660.500" width="42" height="5" fill="#fff" stroke="#222" />
      <path d="M167 665h43" stroke="#2c2e2c" strokeWidth="3" />
      <text x="213" y="665" fontFamily="Liberation Sans, sans-serif" fontSize="9" fill="#2c2c2e">50 mm</text>
    </svg>
  );
}

const legendColors = [
  "#f42a00", "#f04200", "#f05600", "#ee6c00", "#ee8200", "#ee9800", "#f0ac00", "#f0ba00", "#f0cc00", "#f2de00",
  "#00dcec", "#00d4ea", "#00bce2", "#06a8de", "#068eda", "#0a7cd2", "#0a66ce", "#0e54c8", "#0c40c2", "#0a2eba",
];

const legendLabels: [string, number, string][] = [
  ["1.0000", 20, "#111"], ["0.8", 55, "#7e7e82"], ["0.6", 91, "#8c8c90"], ["0.4", 127, "#9c9ca0"],
  ["0.1", 182, "#30b030"], ["0.0000", 200, "#111"], ["-0.1", 218, "#30b030"],
  ["-0.4", 271, "#626266"], ["-0.6", 307, "#6a6a6e"], ["-0.8", 343, "#6d6d70"], ["-1.0000", 380, "#111"],
];

function Legend() {
  return (
    <svg width="70" height="396" viewBox="0 0 70 396" className="absolute top-[87px] right-0" role="img" aria-label="Deviation scale">
      <rect x="43.500" y="3.500" width="24" height="11" fill="#fb0000" stroke="#3a0505" />
      {legendColors.map((c, i) => (
        <rect key={c} x="43" y={19 + i * 18} width="24" height="18" fill={c} />
      ))}
      <rect x="45" y="181" width="19" height="35" fill="#0cd40c" />
      <path d="M45.500 184v-2.500h3M60 181.500h3.500v2.500M45.500 213v2.500h3M60 215.500h3.500V213" stroke="#0a6a0a" fill="none" />
      <path d="M43 378.500h24" stroke="#ccccdc" strokeWidth="3" />
      <rect x="43.500" y="383.500" width="24" height="10" fill="#0000f6" stroke="#101060" />
      <path d="M35 15l8 4.500-8 4.500zM35 195l8 4.500-8 4.500zM35 375l8 4.500-8 4.500z" fill="#080808" />
      <path d="M35.500 177.500l7 4-7 4zM35.500 213l7 4-7 4z" fill="#59b859" stroke="#0d6a10" />
      <g fontFamily="Liberation Sans, sans-serif" fontSize="9" textAnchor="end">
        {legendLabels.map(([t, y, c]) => (
          <text key={t} x="33" y={y + 3} fill={c}>{t}</text>
        ))}
      </g>
    </svg>
  );
}

const faint = "#a9acb0";
const viewTools: { name: string; w: string; on?: boolean; art: ReactNode }[] = [
  { name: "Shaded", w: "w-[20px]", art: <path d="M5 2h7l3 6-4 6H5L1 8z" fill="#dfe7ee" stroke="#6c7680" /> },
  { name: "Shaded options", w: "w-[9px]", art: <path d="M6 11h4l-2 2z" fill="#555" /> },
  { name: "View cube", w: "w-[20px]", art: <path d="M2 5l3-3h10v9l-3 3H2zM2 5h10v9M12 5l3-3" fill="#c4c9ce" stroke="#55595e" /> },
  { name: "View options", w: "w-[12px]", art: <path d="M6 11h4l-2 2z" fill="#555" /> },
  { name: "Section", w: "w-[27px]", art: <><path d="M2 5l4-3h9v9l-4 3H2z" fill="#e4ebd0" stroke="#556" /><path d="M2 5h9v9H2z" fill="#cfe08e" stroke="#55702a" /><path d="M11 5l4-3M6 2v8h9M2 14l4-4" fill="none" stroke="#55702a" /></> },
  { name: "Section options", w: "w-[6px]", art: <path d="M6 11h4l-2 2z" fill="#555" /> },
  { name: "Rotate left", w: "w-[21px]", art: <><path d="M9 2h5v12H9zM1 9h8v5H1z" fill="#fff" stroke="#555" /><path d="M3 7q0-4 5-4" fill="none" stroke="#84a83a" strokeWidth="1.500" /></> },
  { name: "Rotate right", w: "w-[20px]", art: <><path d="M1 2h6v12H1zM7 9h8v5H7z" fill="#fff" stroke="#555" /><path d="M8 3q5 0 5 4" fill="none" stroke="#84a83a" strokeWidth="1.500" /></> },
  { name: "Split", w: "w-[20px]", art: <><path d="M1.500 2h5v12h-5zM9.500 2h5v12h-5z" fill="#fff" stroke="#50545a" /><path d="M8 1v14" stroke="#50545a" /></> },
  { name: "Normal view", w: "w-[21px]", art: <><path d="M1 9l3-2h11l-3 2v5H1zM12 14l3-3V7" fill="#cfe08e" stroke="#55702a" /><path d="M8 10V2M5.500 4.500 8 2l2.500 2.500" fill="none" stroke="#456020" strokeWidth="1.500" /></> },
  { name: "Callout grid", w: "w-[20px] ml-[7px]", on: true, art: <path d="M0 2h7v3H0zM9 2h7v3H9zM0 7h7v3H0zM9 7h7v3H9zM0 12h7v3H0zM9 12h7v3H9z" fill="#dbe8bb" stroke="#405a1c" /> },
  { name: "Callout align", w: "w-[21px]", art: <><path d="M8.500 1.500h7v5h-7zM8.500 9.500h7v5h-7z" fill="#d7e4b0" stroke="#566a2c" /><path d="M1 4h7M1 12h7M10 4h4M10 12h4" stroke="#444" /><path d="M5 8h11" stroke="#d04040" strokeWidth="1.500" /></> },
  { name: "Line select", w: "w-[20px] ml-[6px]", art: <path d="M2 2l12 12" stroke={faint} fill="none" /> },
  { name: "Rectangle select", w: "w-[20px]", on: true, art: <path d="M1 2h14v12H1z" stroke="#3f6414" strokeDasharray="2 1.500" fill="none" /> },
  { name: "Circle select", w: "w-[21px]", art: <><circle cx="8" cy="8" r="6.500" stroke={faint} strokeDasharray="2 1.500" fill="none" /><path d="M5 8h6M8 5v6" stroke={faint} /></> },
  { name: "Polygon select", w: "w-[20px]", art: <><path d="M4 2h8l3 6-3 6H4L1 8z" stroke={faint} strokeDasharray="2 1.500" fill="none" /><path d="M5 8h6M8 5v6" stroke={faint} /></> },
  { name: "Freeform select", w: "w-[21px]", art: <path d="M3 7q3-1 6-2 5-5 6-1 0 7-5 8-8 3-9-2 0-2 2-3z" stroke={faint} strokeDasharray="2 1" fill="none" /> },
  { name: "Lasso", w: "w-[20px]", art: <><path d="M5 12q-5-4-2-7 3-4 9-2 5 3 2 7" stroke="#3f4246" strokeWidth="1.200" strokeDasharray="2 1" fill="none" /><path d="M8 6v8l2-2 2 4 1-1-2-3h3z" fill="#3f4246" /></> },
  { name: "Brush", w: "w-[21px]", art: <path d="M1 2h13v12H1zM4 10l3 2 8-10" stroke={faint} strokeDasharray="3 1" fill="none" /> },
  { name: "Fill", w: "w-[20px]", art: <path d="M1 8l7-6 7 6-7 6zM2 8h12M5 3l5 4" stroke={faint} fill="none" /> },
  { name: "Flood", w: "w-[21px]", art: <path d="M2 7l6-5 6 5-6 5zM3 7h10M1 14.500h14M3 10l-2 4M13 10l2 4" stroke={faint} fill="none" /> },
  { name: "Visible only", w: "w-[20px]", art: <><path d="M2 2h12v11H2z" stroke={faint} strokeDasharray="2 1.500" fill="none" /><ellipse cx="10" cy="10" rx="5" ry="3" fill="#d3d6d9" stroke={faint} /><circle cx="10" cy="10" r="1.500" fill={faint} /></> },
];

function ViewToolbar() {
  return (
    <div role="toolbar" className="absolute top-0 left-[338px] flex h-[21px] w-[441px] items-center bg-[#cfd2d6] pl-[3px]">
      {viewTools.map((t) => (
        <button
          type="button"
          key={t.name}
          aria-label={t.name}
          className={`flex h-[17px] shrink-0 items-center justify-center ${t.on ? "bg-[#8cb83e]" : ""} ${t.w}`}
        >
          <svg width="16" height="16" viewBox="0 0 16 16" fill="none" className="shrink-0 overflow-visible" aria-hidden="true">{t.art}</svg>
        </button>
      ))}
    </div>
  );
}

function Viewport() {
  return (
    <main className="flex min-w-0 flex-1 flex-col">
      <div className="relative flex-1 overflow-hidden bg-linear-to-b from-[#414145] via-[#929297] via-50% to-[#cbcbd0]">
        <Bracket />
        <ViewToolbar />
        {checks.map((c) => <Callout key={c.name} c={c} />)}
        <Legend />
        <svg width="6" height="6" viewBox="0 0 6 6" className="absolute top-[2px] right-[2px]" aria-hidden="true"><path d="M0 0v6h6z" fill="#fff" /></svg>
      </div>
      <div className="flex h-[16px] shrink-0 items-center justify-between bg-[#f0f0f0] pr-[3px] pl-[2px] text-[9px] text-[#222]">
        <div className="flex h-full items-center gap-[5px]">
          <button type="button" aria-label="Previous tab">
            <svg width="5" height="7" viewBox="0 0 5 7" fill="none" stroke="#666" aria-hidden="true"><path d="M4 1v5L1 3.500z" /></svg>
          </button>
          <button type="button" className="h-[14px] w-[72px] bg-[#d5e5f8] pr-[8px] text-center leading-[13px] whitespace-nowrap [clip-path:polygon(0_0,100%_0,89%_100%,8%_100%)]">Model View</button>
        </div>
        <div className="flex items-center gap-[3px]">
          <button type="button" aria-label="Next tab">
            <svg width="5" height="7" viewBox="0 0 5 7" fill="none" stroke="#666" aria-hidden="true"><path d="M1 1v5l3-2.500z" /></svg>
          </button>
          <button type="button" aria-label="Close tab" className="pr-px pl-[6px]">
            <svg width="6" height="6" viewBox="0 0 6 6" stroke="#555" strokeWidth="1.200" aria-hidden="true"><path d="M0 0l6 6M6 0 0 6" /></svg>
          </button>
          <button type="button" aria-label="Go to tab" className="border border-[#d4d5d6] bg-white p-px">
            <svg width="8" height="8" viewBox="0 0 8 8" aria-hidden="true"><path d="M1 2.500h3V0l4 4-4 4V5.500H1z" fill="#222" /></svg>
          </button>
          <button type="button" aria-label="Tab list" className="border border-[#d4d5d6] bg-white p-px">
            <svg width="8" height="8" viewBox="0 0 8 8" aria-hidden="true"><path d="M1 3h6L4 6z" fill="#222" /></svg>
          </button>
        </div>
      </div>
    </main>
  );
}

function RightPanel() {
  const card = "shrink-0 rounded-l-[3px] border border-r-0 border-[#c9cbcd] bg-white";
  return (
    <aside className="ml-[6px] flex w-[5px] shrink-0 flex-col overflow-hidden bg-[#f7f7f7]">
      <div className="flex h-[17px] shrink-0 items-center justify-end bg-[#8e9194]"><span className="h-[7px] w-px bg-white" /></div>
      <div className="flex h-[20px] shrink-0 items-center justify-end bg-[#eef0f2]"><span className="h-[7px] w-px bg-[#56789c]" /></div>
      <div className="mt-[20px] ml-[2px] flex flex-col gap-[7px]">
        <div className={`h-[98px] ${card}`} />
        <div className={`h-[180px] ${card}`} />
        <div className={`h-[184px] ${card}`} />
        <div className={`h-[50px] ${card}`} />
      </div>
    </aside>
  );
}

export default function App() {
  return (
    <div className="flex h-screen flex-col overflow-hidden bg-black py-[13px] font-[Lato,'Noto_Sans',sans-serif]">
      <Ribbon />
      <div className="flex min-h-0 flex-1 bg-[#ececec]">
        <LeftPanel />
        <div className="w-[5px] shrink-0" />
        <Viewport />
        <RightPanel />
      </div>
      <footer className="h-[13px] shrink-0 overflow-hidden border-t-4 border-[#e6e6e6] bg-[#8e9194] text-[9px] leading-[18px] text-white">
        ew - RPS Position (Auto)
      </footer>
    </div>
  );
}
